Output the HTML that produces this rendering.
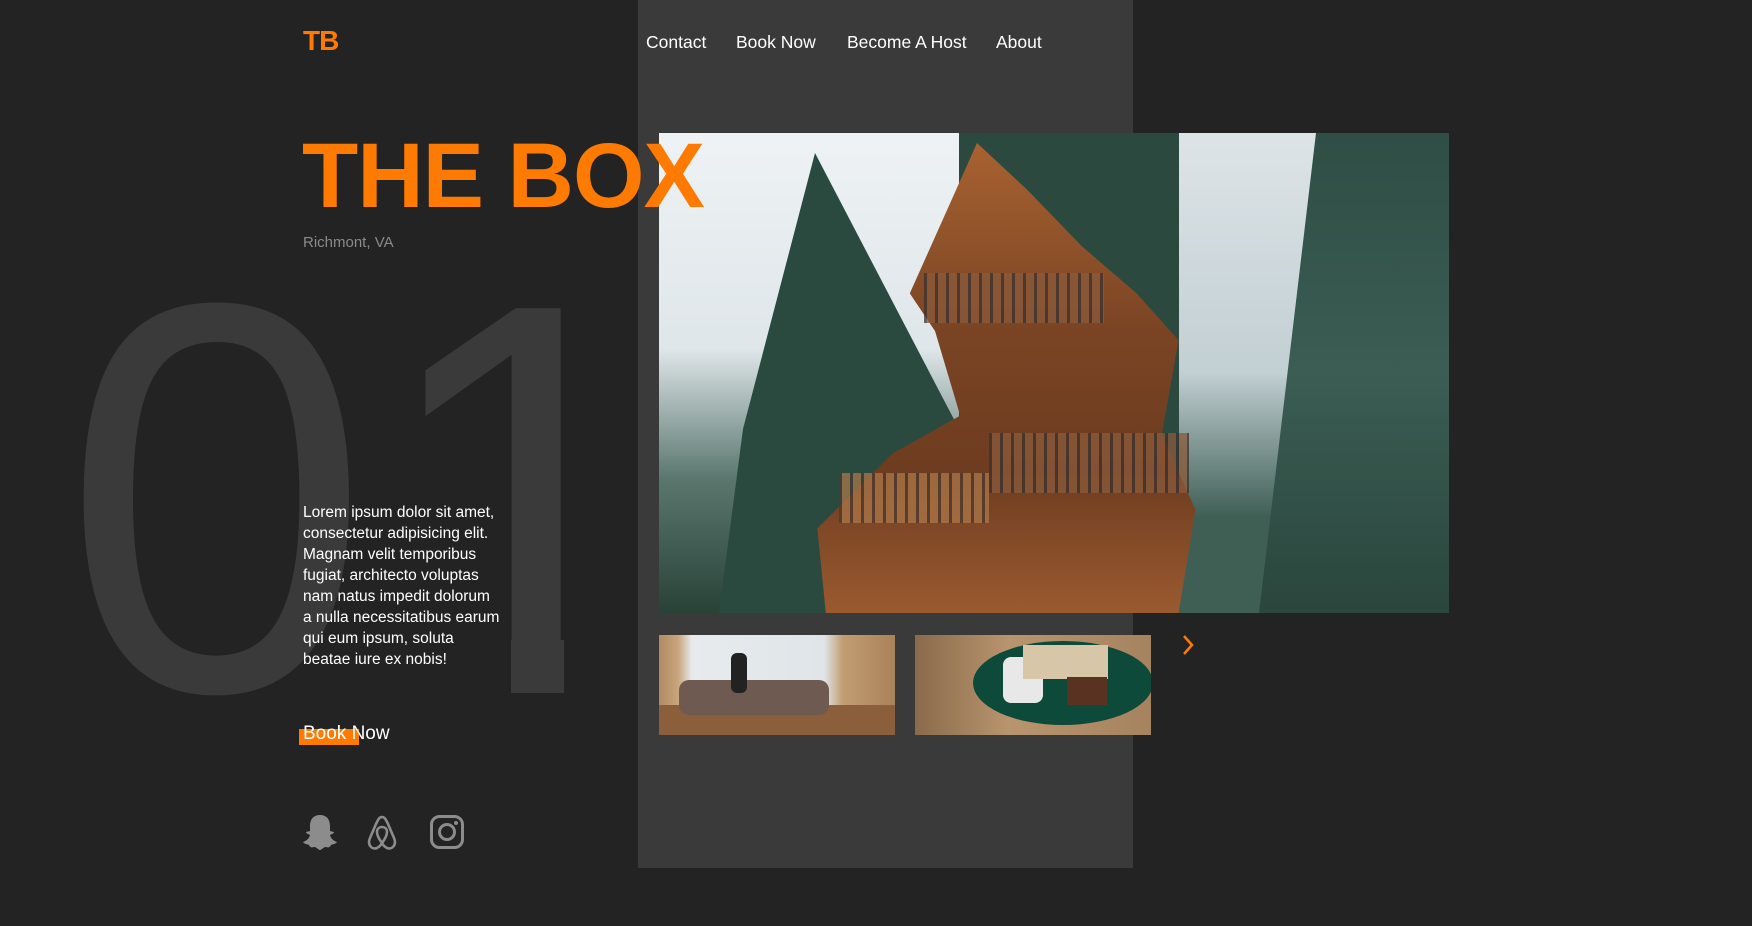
<!DOCTYPE html>
<html><head><meta charset="utf-8"><style>
*{margin:0;padding:0;box-sizing:border-box}
html,body{width:1752px;height:926px;overflow:hidden;background:#232323;font-family:"Liberation Sans",sans-serif}
.abs{position:absolute}
.panel{left:638px;top:0;width:495px;height:868px;background:#3a3a3a}
.logo{left:303px;top:25px;font-size:28px;color:#ff7a00;font-weight:bold;letter-spacing:-1px}
.nav{top:32px;font-size:17.5px;color:#fff}
.title{left:302px;top:130px;font-size:92px;font-weight:bold;color:#ff7a00;letter-spacing:-1px;line-height:1;white-space:nowrap;z-index:3}
.sub{left:303px;top:234px;font-size:15px;color:#8a8a8a}
.para{left:303px;top:502px;font-size:15.5px;line-height:21px;color:#fff;z-index:2;white-space:nowrap}
.btnbar{left:299px;top:729px;width:60px;height:16px;background:#ff7a00}
.btn{left:303px;top:723px;font-size:19px;color:#fff}
.photo{left:659px;top:133px;width:790px;height:480px;overflow:hidden;background:#2c4940}
.th{top:635px;height:100px;width:236px;overflow:hidden}
</style></head><body>
<div class="abs panel"></div>
<svg class="abs" style="left:0;top:0;z-index:1" width="700" height="926">
<defs><clipPath id="c1"><rect x="380" y="250" width="200" height="395"/></clipPath></defs>
<text x="62" y="690" font-family="Liberation Sans" font-size="555" fill="#3a3a3a">0</text>
<text x="372" y="690" font-family="Liberation Sans" font-size="555" fill="#3a3a3a" clip-path="url(#c1)">1</text>
<rect x="511" y="640" width="53" height="53" fill="#3a3a3a"/>
</svg>
<div class="abs logo">TB</div>
<div class="abs nav" style="left:646px">Contact</div>
<div class="abs nav" style="left:736px">Book Now</div>
<div class="abs nav" style="left:847px">Become A Host</div>
<div class="abs nav" style="left:996px">About</div>

<div class="abs photo">
 <div class="abs" style="left:0;top:0;width:300px;height:480px;background:linear-gradient(180deg,#eef2f5 0%,#dfe6e9 45%,#5a776e 72%,#294238 100%)"></div>
 <div class="abs" style="left:60px;top:20px;width:240px;height:460px;background:#2a4a40;clip-path:polygon(40% 0,60% 20%,80% 40%,100% 60%,100% 100%,0 100%,10% 60%,25% 30%)"></div>
 <div class="abs" style="left:520px;top:0;width:180px;height:480px;background:linear-gradient(180deg,#dde4e7,#c2cfd3 50%,#3f5f55 80%)"></div>
 <div class="abs" style="left:600px;top:0;width:190px;height:480px;background:linear-gradient(180deg,#2f4e45,#3b5d53 50%,#2a463d);clip-path:polygon(30% 0,100% 0,100% 100%,0 100%,15% 50%)"></div>
 <div class="abs" style="left:150px;top:10px;width:420px;height:470px;background:linear-gradient(180deg,#a86230,#7a4424 40%,#6e3c20 70%,#9a5a30);clip-path:polygon(40% 0,52% 10%,65% 22%,78% 32%,88% 42%,84% 62%,92% 78%,88% 100%,4% 100%,2% 82%,20% 66%,36% 58%,30% 40%,24% 32%)"></div>
 <div class="abs" style="left:265px;top:140px;width:180px;height:50px;background:repeating-linear-gradient(90deg,#3a3230 0 3px,#8a5a3a 3px 11px);opacity:.75"></div>
 <div class="abs" style="left:330px;top:300px;width:200px;height:60px;background:repeating-linear-gradient(90deg,#3a3230 0 3px,#8a5a3a 3px 11px);opacity:.75"></div>
 <div class="abs" style="left:180px;top:340px;width:150px;height:50px;background:repeating-linear-gradient(90deg,#4a3a30 0 3px,#b07a4a 3px 11px);opacity:.7"></div>
</div>
<div class="abs th" style="left:659px;background:linear-gradient(90deg,#b08a62 0,#c9a47c 8%,#e7ebee 14%,#dfe5e8 70%,#c29c72 78%,#a98259 100%)">
 <div class="abs" style="left:0;top:70px;width:236px;height:30px;background:#8b5e3c"></div>
 <div class="abs" style="left:20px;top:45px;width:150px;height:35px;background:#6e5a50;border-radius:10px"></div>
 <div class="abs" style="left:72px;top:18px;width:16px;height:40px;background:#222;border-radius:6px"></div>
</div>
<div class="abs th" style="left:915px;background:linear-gradient(90deg,#8a6a4c,#b8956e 40%,#a6835f)">
 <div class="abs" style="left:58px;top:6px;width:180px;height:84px;border-radius:50%;background:#0e4a3a"></div>
 <div class="abs" style="left:88px;top:22px;width:40px;height:46px;background:#e8e8e8;border-radius:8px"></div>
 <div class="abs" style="left:108px;top:10px;width:85px;height:34px;background:#d8c6a8"></div>
 <div class="abs" style="left:152px;top:42px;width:40px;height:28px;background:#5a3222"></div>
</div>
<svg class="abs" style="left:1181px;top:634px" width="14" height="22" viewBox="0 0 14 22"><path d="M3 2 L11 11 L3 20" fill="none" stroke="#ff7a00" stroke-width="2.5"/></svg>

<div class="abs title">THE BOX</div>
<div class="abs sub">Richmont, VA</div>
<div class="abs para">Lorem ipsum dolor sit amet,<br>consectetur adipisicing elit.<br>Magnam velit temporibus<br>fugiat, architecto voluptas<br>nam natus impedit dolorum<br>a nulla necessitatibus earum<br>qui eum ipsum, soluta<br>beatae iure ex nobis!</div>
<div class="abs btnbar"></div>
<div class="abs btn">Book Now</div>

<svg class="abs" style="left:302px;top:813px" width="36" height="40" viewBox="0 0 36 40"><path d="M18 2c-7 0-10 5-10 11v5l-4 1c0 2 3 2 4 3-1 4-4 6-7 7 1 2 4 2 6 3 1 2 2 3 5 2 3 0 4 3 6 3s3-3 6-3c3 1 4 0 5-2 2-1 5-1 6-3-3-1-6-3-7-7 1-1 4-1 4-3l-4-1v-5c0-6-3-11-10-11z" fill="#8c8c8c"/></svg>
<svg class="abs" style="left:366px;top:813px" width="32" height="40" viewBox="0 0 32 40"><path d="M16 4c-3 0-4 3-6 7L4 25c-3 7 2 12 7 10 2-1 4-3 5-5 1 2 3 4 5 5 5 2 10-3 7-10L22 11c-2-4-3-7-6-7zM16 30c-3-4-5-8-5-11 0-3 2-5 5-5s5 2 5 5c0 3-2 7-5 11z" fill="none" stroke="#8c8c8c" stroke-width="2.6" stroke-linejoin="round"/></svg>
<svg class="abs" style="left:429px;top:814px" width="36" height="36" viewBox="0 0 36 36"><rect x="2.5" y="2.5" width="31" height="31" rx="8" fill="none" stroke="#8c8c8c" stroke-width="3"/><circle cx="18" cy="18" r="7.5" fill="none" stroke="#8c8c8c" stroke-width="3"/><circle cx="27" cy="9" r="2" fill="#8c8c8c"/></svg>
</body></html>
